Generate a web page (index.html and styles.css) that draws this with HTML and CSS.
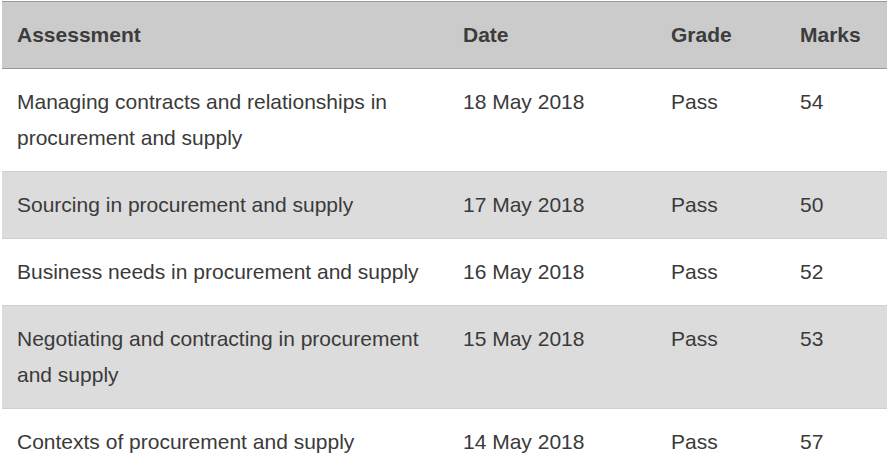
FILE: index.html
```html
<!DOCTYPE html>
<html>
<head>
<meta charset="utf-8">
<link rel="stylesheet" href="styles.css">
</head>
<body>
<table class="results">
  <thead>
    <tr>
      <th class="col-a">Assessment</th>
      <th class="col-d">Date</th>
      <th class="col-g">Grade</th>
      <th class="col-m">Marks</th>
    </tr>
  </thead>
  <tbody>
    <tr>
      <td>Managing contracts and relationships in procurement and supply</td>
      <td>18 May 2018</td>
      <td>Pass</td>
      <td>54</td>
    </tr>
    <tr class="alt">
      <td>Sourcing in procurement and supply</td>
      <td>17 May 2018</td>
      <td>Pass</td>
      <td>50</td>
    </tr>
    <tr>
      <td>Business needs in procurement and supply</td>
      <td>16 May 2018</td>
      <td>Pass</td>
      <td>52</td>
    </tr>
    <tr class="alt">
      <td>Negotiating and contracting in procurement and supply</td>
      <td>15 May 2018</td>
      <td>Pass</td>
      <td>53</td>
    </tr>
    <tr>
      <td>Contexts of procurement and supply</td>
      <td>14 May 2018</td>
      <td>Pass</td>
      <td>57</td>
    </tr>
  </tbody>
</table>
</body>
</html>
```
FILE: styles.css
```css
html, body {
  background: #ffffff;
}
body {
  margin: 1px 4px 0 2px;
  font-family: "Liberation Sans", Arial, sans-serif;
  font-size: 21px;
  color: #333333;
}
.results {
  width: 885px;
  border-collapse: collapse;
  table-layout: fixed;
}
.results th,
.results td {
  box-sizing: border-box;
  padding: 15px 15px;
  line-height: 36px;
  text-align: left;
  vertical-align: top;
}
.results thead th {
  background: #cbcbcb;
  font-weight: bold;
  color: #3c3c3c;
  border-top: 1px solid #999999;
  border-bottom: 1px solid #999999;
}
.results td {
  color: #3a3a3a;
}
.results tbody tr {
  border-bottom: 1px solid #cfcfcf;
}
.results tbody tr.alt {
  background: #dcdcdc;
}
.col-a { width: 446px; }
.col-d { width: 208px; }
.col-g { width: 129px; }
.col-m { width: 102px; }
```
